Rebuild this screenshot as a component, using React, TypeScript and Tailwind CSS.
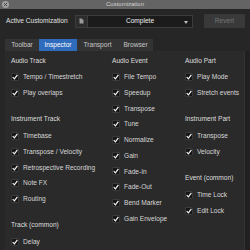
import { ReactNode } from 'react';

const sections: any = [
  [
    { title: 'Audio Track', items: ['Tempo / Timestretch', 'Play overlaps'] },
    {
      title: 'Instrument Track',
      items: ['Timebase', 'Transpose / Velocity', 'Retrospective Recording', 'Note FX', 'Routing']
    },
    { title: 'Track (common)', items: ['Delay'] }
  ],
  [
    {
      title: 'Audio Event',
      items: [
        'File Tempo',
        'Speedup',
        'Transpose',
        'Tune',
        'Normalize',
        'Gain',
        'Fade-In',
        'Fade-Out',
        'Bend Marker',
        'Gain Envelope'
      ]
    }
  ],
  [
    { title: 'Audio Part', items: ['Play Mode', 'Stretch events'] },
    { title: 'Instrument Part', items: ['Transpose', 'Velocity'] },
    { title: 'Event (common)', items: ['Time Lock', 'Edit Lock'] }
  ]
];

const colWidths = ['w-[101px]', 'w-[73px]', 'flex-1'];

const CheckRow = ({ label }: { label: string }) => (
  <div className="flex items-center h-[15.7px]">
    <div className="w-[8px] h-[8px] rounded-[1px] bg-[#161616] border border-[#3a3a3a] flex items-center justify-center">
      <svg width="6" height="6" viewBox="0 0 10 10">
        <path d="M1.2 5.2 L4 8 L9 1.5" fill="none" stroke="#f4f4f4" strokeWidth="2" />
      </svg>
    </div>
    <span className="ml-[4px] text-[#d6d6d6] whitespace-nowrap">{label}</span>
  </div>
);

const Section = ({ title, items, first }: any) => (
  <div className={first ? '' : 'mt-[9.5px]'}>
    <div className="h-[18px] flex items-center text-[#dedede] whitespace-nowrap">{title}</div>
    {items.map((item: string, index: number) => (
      <CheckRow key={index} label={item} />
    ))}
  </div>
);

const Tab = ({ children, active }: { children: ReactNode; active?: boolean }) => (
  <div
    className={`h-full flex items-center justify-center ${
      active ? 'bg-[#2f6cbd] text-white' : 'text-[#c8c8c8]'
    }`}
  >
    {children}
  </div>
);

const App = () => {
  return (
    <div
      className="w-[250px] h-[250px] overflow-hidden bg-[#262626] flex flex-col text-[6.6px]"
      style={{ fontFamily: '"Liberation Sans", Arial, sans-serif' }}
    >
      {/* title bar */}
      <div className="h-[9px] bg-[#646464] relative flex items-center justify-center text-[#d2d2d2] text-[6px]">
        <div className="absolute left-[2px] top-[1px] w-[7px] h-[7px] rounded-full bg-[#a0a0a0] flex items-center justify-center">
          <svg width="5" height="5" viewBox="0 0 10 10">
            <path d="M2 2 L8 8 M8 2 L2 8" stroke="#4a4a4a" strokeWidth="2" />
          </svg>
        </div>
        Customization
      </div>

      {/* active customization row */}
      <div className="flex items-center h-[22px] mt-[3px] pl-[6px] pr-[5px]">
        <span className="text-[#e0e0e0] w-[69px] whitespace-nowrap">Active Customization</span>
        <div className="flex h-[13px] w-[118px] border border-[#3c3c3c] bg-[#1b1b1b]">
          <div className="w-[12px] h-full bg-[#2c2c2c] border-r border-[#3c3c3c] flex items-center justify-center">
            <svg width="5" height="6" viewBox="0 0 10 12">
              <path d="M1 1 H6 L9 4 V11 H1 Z" fill="#9a9a9a" />
              <path d="M6 1 V4 H9" fill="#5a5a5a" />
            </svg>
          </div>
          <div className="flex-1 relative flex items-center justify-center text-[#eeeeee]">
            Complete
            <svg className="absolute right-[4px] top-[5px]" width="4" height="3" viewBox="0 0 8 6">
              <path d="M0 0 H8 L4 6 Z" fill="#bdbdbd" />
            </svg>
          </div>
        </div>
        <div className="ml-auto w-[41px] h-[14px] bg-[#393939] rounded-[1px] flex items-center justify-center text-[#767676]">
          Revert
        </div>
      </div>

      {/* tabs */}
      <div className="mt-[8px] ml-[5px] h-[14px] w-[148px] bg-[#333333] grid grid-cols-[34px_38px_41px_35px]">
        <Tab>Toolbar</Tab>
        <Tab active>Inspector</Tab>
        <Tab>Transport</Tab>
        <Tab>Browser</Tab>
      </div>

      {/* content */}
      <div className="flex-1 flex">
        <div className="w-[239px] ml-[5px] bg-[#2a2a2a] pt-[1px] pl-[6px] flex">
          {sections.map((column: any, ci: number) => (
            <div key={ci} className={colWidths[ci]}>
              {column.map((section: any, si: number) => (
                <Section key={si} title={section.title} items={section.items} first={si === 0} />
              ))}
            </div>
          ))}
        </div>
        <div className="flex-1 bg-[#202020] border-l border-[#333333]"></div>
      </div>
    </div>
  );
};

export default App;
